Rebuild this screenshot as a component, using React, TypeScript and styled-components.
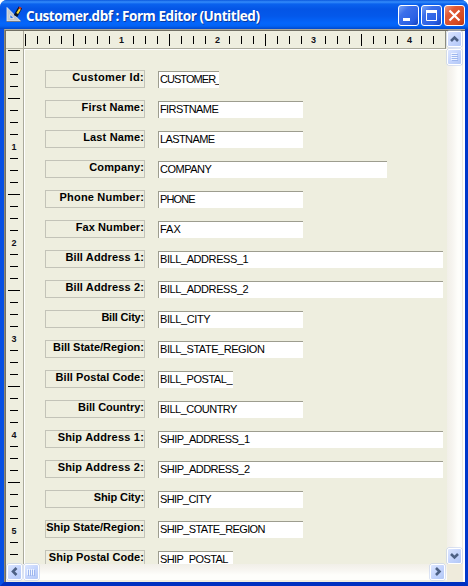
import React from "react";
import styled, { createGlobalStyle } from "styled-components";

const face = "#eeeedf";

const GlobalStyle = createGlobalStyle`
  * { box-sizing: border-box; }
  body { margin: 0; background: #fff; font-family: "Liberation Sans", Arial, sans-serif; }
`;

const Window = styled.div`
  width: 468px;
  height: 586px;
  display: flex;
  flex-direction: column;
  overflow: hidden;
  border-radius: 7px 7px 0 0;
  background: #0650e4;
`;

const TitleBar = styled.header`
  height: 29px;
  flex: none;
  display: flex;
  align-items: flex-start;
  padding: 5px 3px 0 5px;
  background: linear-gradient(#0a57dd 0, #348cfb 2px, #0a62ee 4px, #0455e6 9px, #0458ea 16px, #0466fc 23px, #0363f5 26px, #0148cb 29px);
`;

const AppIcon = styled.svg`
  width: 18px;
  height: 18px;
  flex: none;
`;

const Title = styled.h1`
  flex: 1;
  margin: 1px 0 0 3px;
  font: 700 13.5px/20px "Open Sans", sans-serif;
  letter-spacing: -0.45px;
  white-space: nowrap;
  color: #fff;
  text-shadow: 1px 1px 0 #0a3ba0;
`;

const Caption = styled.span<{ $close?: boolean }>`
  width: 21px;
  height: 21px;
  flex: none;
  margin-left: 2px;
  border: 1px solid #fff;
  border-radius: 3px;
  background: ${(p) =>
    p.$close
      ? "linear-gradient(135deg, #ee9a82, #e05a36 30%, #d64a22 75%, #b83410)"
      : "linear-gradient(135deg, #7aa4f6, #3d70ea 30%, #2a60e4 75%, #1440bc)"};
  svg { display: block; }
`;

const Frame = styled.div`
  flex: 1;
  min-height: 0;
  display: flex;
  border: solid;
  border-width: 0 3px 4px 4px;
  border-color: #0042dc #0038cb #0030c0 #0650e4;
`;

const Client = styled.main`
  flex: 1;
  min-width: 0;
  display: grid;
  grid-template-columns: 18px 423px 18px;
  grid-template-rows: 18px 515px 18px;
  background: ${face};
  border-top: 1px solid #aca899;
  border-left: 1px solid #8c8878;
  box-shadow: inset 1px 1px 0 #716f64;
  padding: 1px 0 0 1px;
  overflow: hidden;
`;

const Corner = styled.div`
  border-right: 1px solid #aca899;
  border-bottom: 1px solid #b5b5a5;
`;

const TopRuler = styled.div`
  display: flex;
  align-items: center;
  width: 422px;
  overflow: hidden;
  border-bottom: 1px solid #aaaa9c;
  border-right: 1px solid #8d8d80;
`;

const SideRuler = styled.div`
  display: flex;
  flex-direction: column;
  align-items: center;
  overflow: hidden;
  border-right: 1px solid #aaaa9c;
  padding-right: 1px;
`;

const TopStop = styled.span`
  width: 12px;
  height: 12px;
  flex: none;
  display: flex;
  justify-content: center;
  align-items: center;
  margin-left: -5px;
  margin-right: 5px;
`;

const SideStop = styled.span`
  height: 12px;
  width: 16px;
  flex: none;
  display: flex;
  justify-content: center;
  align-items: center;
  margin-top: -5px;
  margin-bottom: 5px;
`;

const TopTick = styled.i<{ $major: boolean }>`
  width: 1px;
  height: ${(p) => (p.$major ? 12 : 8)}px;
  background: #000;
`;

const SideTick = styled.i<{ $major: boolean }>`
  height: 1px;
  width: ${(p) => (p.$major ? 12 : 8)}px;
  background: #000;
`;

const RulerNumber = styled.b<{ $side?: boolean }>`
  font-size: 9px;
  line-height: 12px;
  padding-top: ${(p) => (p.$side ? 2 : 0)}px;
  padding-left: ${(p) => (p.$side ? 0 : 1)}px;
  color: #101018;
`;

const Canvas = styled.section`
  overflow: hidden;
  border-top: 1px solid #fff;
  border-left: 1px solid #fff;
  display: flex;
  flex-direction: column;
  gap: 12px;
  padding: 20px 3px 0 20px;
`;

const Row = styled.div`
  display: flex;
  height: 18px;
  flex: none;
`;

const Label = styled.label<{ $tracking: number }>`
  width: 100px;
  height: 18px;
  flex: none;
  display: flex;
  justify-content: flex-end;
  border: 1px solid #c3c3b8;
  font-weight: 700;
  font-size: 11px;
  line-height: 13px;
  letter-spacing: ${(p) => p.$tracking}px;
  white-space: nowrap;
  color: #000;
`;

const Field = styled.div<{ $w: number; $tracking: number }>`
  width: ${(p) => p.$w}px;
  height: 17px;
  flex: none;
  margin: 1px 0 0 13px;
  padding-left: 1px;
  border-top: 1px solid #9d9d8f;
  border-left: 1px solid #9d9d8f;
  background: #fff;
  color: #000;
  font-size: 11px;
  line-height: 15px;
  letter-spacing: ${(p) => p.$tracking}px;
  white-space: nowrap;
  overflow: hidden;
`;

const VScroll = styled.div`
  display: flex;
  flex-direction: column;
  align-items: flex-start;
  border-right: 2px solid #fff;
  box-shadow: inset -1px 0 0 #eeeae0;
  background: linear-gradient(90deg, #f1efe8, #f6f4ef 5px, #fefefb 11px);
`;

const HScroll = styled.div`
  grid-column: 1 / 3;
  display: flex;
  align-items: flex-start;
  padding: 0 2px 0 1px;
  border-bottom: 2px solid #f0eee2;
  background: linear-gradient(#f1efe8, #f6f4ef 5px, #fefefb 11px);
`;

const SizeGrip = styled.div`
  background: #efebdc;
  border-right: 2px solid #fff;
`;

const ScrollButton = styled.span`
  width: 15px;
  height: 16px;
  flex: none;
  border: 1px solid #fff;
  border-radius: 2px;
  box-shadow: 0 0 0 0.5px #b9c9ee;
  background: linear-gradient(135deg, #dce6ff, #c1d2fc 60%, #b3c8f6);
  svg { display: block; }
`;

const Spacer = styled.span`
  flex: 1;
`;

const Gap = styled.span`
  width: 2px;
  height: 1px;
  flex: none;
`;

const chevrons = {
  up: "M3 9L6.5 5.5L10 9",
  down: "M3 5L6.5 8.5L10 5",
  left: "M8.5 3L5 6.5L8.5 10",
  right: "M5 3L8.5 6.5L5 10",
};

function Arrow({ dir }: { dir: keyof typeof chevrons }) {
  return (
    <ScrollButton>
      <svg width="13" height="14" viewBox="0 0 13 14">
        <path d={chevrons[dir]} fill="none" stroke="#4d6185" strokeWidth="2.6" />
      </svg>
    </ScrollButton>
  );
}

function Thumb({ vertical }: { vertical?: boolean }) {
  return (
    <ScrollButton>
      <svg width="13" height="14" viewBox="0 0 13 14" shapeRendering="crispEdges">
        {[3, 5, 7, 9].map((n) => (
          <g key={n}>
            {vertical ? (
              <>
                <path d={`M3 ${n + 0.5}h6`} stroke="#f0f5ff" />
                <path d={`M4 ${n + 1.5}h6`} stroke="#9db6ee" />
              </>
            ) : (
              <>
                <path d={`M${n - 0.5} 4v6`} stroke="#f0f5ff" />
                <path d={`M${n + 0.5} 5v6`} stroke="#9db6ee" />
              </>
            )}
          </g>
        ))}
      </svg>
    </ScrollButton>
  );
}

const stops = (count: number) => Array.from({ length: count }, (_, i) => i);

// label, label tracking, column name, column tracking, field width
const fields: [string, number, string, number, number][] = [
  ["Customer Id:", 0.33, "CUSTOMER_", -0.95, 61],
  ["First Name:", 0.18, "FIRSTNAME", -0.6, 145],
  ["Last Name:", 0.15, "LASTNAME", -0.6, 145],
  ["Company:", 0.12, "COMPANY", -0.5, 229],
  ["Phone Number:", 0.2, "PHONE", -0.9, 145],
  ["Fax Number:", 0.1, "FAX", 0, 145],
  ["Bill Address 1:", 0.13, "BILL_ADDRESS_1", -0.42, 285],
  ["Bill Address 2:", 0.13, "BILL_ADDRESS_2", -0.42, 285],
  ["Bill City:", -0.2, "BILL_CITY", -0.4, 145],
  ["Bill State/Region:", 0, "BILL_STATE_REGION", -0.45, 145],
  ["Bill Postal Code:", 0.06, "BILL_POSTAL_", -0.45, 75],
  ["Bill Country:", 0, "BILL_COUNTRY", -0.5, 145],
  ["Ship Address 1:", 0.2, "SHIP_ADDRESS_1", -0.55, 285],
  ["Ship Address 2:", 0.2, "SHIP_ADDRESS_2", -0.55, 285],
  ["Ship City:", -0.1, "SHIP_CITY", -0.65, 145],
  ["Ship State/Region:", 0, "SHIP_STATE_REGION", -0.6, 145],
  ["Ship Postal Code:", 0.06, "SHIP_POSTAL_", -0.6, 75],
];

export default function App() {
  return (
    <>
      <GlobalStyle />
      <Window>
        <TitleBar>
          <AppIcon viewBox="0 0 18 18">
            <path d="M2 2.5V16h13.3z M5 9.5v3.8h4z" fill="#c4c9ce" fillRule="evenodd" stroke="#f0f0ec" strokeWidth=".8" />
            <path d="M1.5 16.5h14" stroke="#737985" />
            <path d="M10.5 11L12.2 8l3.2-5.5" fill="none" stroke="#06142e" strokeWidth="4" />
            <path d="M12.2 8.5l2.8-4.5" stroke="#f7dd36" strokeWidth="2" />
            <path d="M14.5 4l1-1.8" stroke="#d13820" strokeWidth="2.5" />
          </AppIcon>
          <Title>Customer.dbf : Form Editor (Untitled)</Title>
          <Caption>
            <svg width="19" height="19"><path d="M4 13.5h7" stroke="#fff" strokeWidth="3" /></svg>
          </Caption>
          <Caption>
            <svg width="19" height="19">
              <path d="M4.5 5v9.5h10V5" fill="none" stroke="#fff" />
              <path d="M4 5.5h11" stroke="#fff" strokeWidth="3" />
            </svg>
          </Caption>
          <Caption $close>
            <svg width="19" height="19"><path d="M4.5 4.5l10 10M14.5 4.5l-10 10" stroke="#fff" strokeWidth="2.2" /></svg>
          </Caption>
        </TitleBar>
        <Frame>
          <Client>
            <Corner />
            <TopRuler>
              {stops(35).map((i) => (
                <TopStop key={i}>
                  {i % 8 === 0 && i > 0 ? <RulerNumber>{i / 8}</RulerNumber> : <TopTick $major={i % 4 === 0} />}
                </TopStop>
              ))}
            </TopRuler>
            <VScroll>
              <Arrow dir="up" />
            </VScroll>
            <SideRuler>
              {stops(43).map((i) => (
                <SideStop key={i}>
                  {i % 8 === 0 && i > 0 ? <RulerNumber $side>{i / 8}</RulerNumber> : <SideTick $major={i % 4 === 0} />}
                </SideStop>
              ))}
            </SideRuler>
            <Canvas>
              {fields.map(([label, labelTracking, column, columnTracking, width]) => (
                <Row key={label}>
                  <Label $tracking={labelTracking}>{label}</Label>
                  <Field $w={width} $tracking={columnTracking}>{column}</Field>
                </Row>
              ))}
            </Canvas>
            <VScroll>
              <Thumb vertical />
              <Spacer />
              <Arrow dir="down" />
            </VScroll>
            <HScroll>
              <Arrow dir="left" />
              <Gap />
              <Thumb />
              <Spacer />
              <Arrow dir="right" />
            </HScroll>
            <SizeGrip />
          </Client>
        </Frame>
      </Window>
    </>
  );
}
